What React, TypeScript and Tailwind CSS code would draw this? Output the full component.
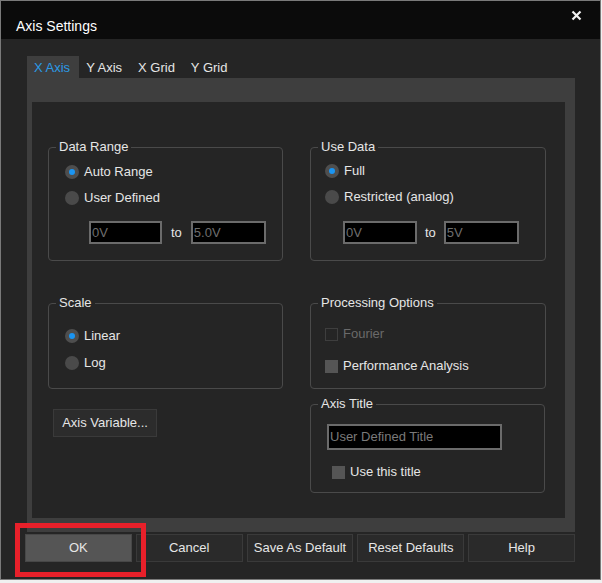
import React from "react";

function Radio({ label, checked }: { label: string; checked?: boolean }) {
  return (
    <div className="flex h-[20px] items-center gap-[5px]">
      <span
        className={
          "flex h-[14px] w-[14px] items-center justify-center rounded-full " +
          (checked ? "bg-[#4e4e4e]" : "bg-[#4a4a4a]")
        }
      >
        {checked && <span className="h-[6px] w-[6px] rounded-full bg-[#1b95f2]" />}
      </span>
      <span>{label}</span>
    </div>
  );
}

function Check({ label, disabled }: { label: string; disabled?: boolean }) {
  return (
    <div className="flex h-[20px] items-center gap-[5px]">
      <span
        className={
          "h-[13px] w-[13px] " +
          (disabled ? "border border-[#3e3e3e]" : "bg-[#555555]")
        }
      />
      <span className={disabled ? "text-[#6a6a6a]" : ""}>{label}</span>
    </div>
  );
}

function Field({ value, w }: { value: string; w: string }) {
  return (
    <div
      className={
        "flex h-[23px] items-center border-2 border-[#6b6b6b] bg-black pl-[1px] text-[#6e6e6e] " + w
      }
    >
      {value}
    </div>
  );
}

function Group({
  title,
  className,
  children,
}: {
  title: string;
  className: string;
  children: React.ReactNode;
}) {
  return (
    <fieldset className={"rounded-[4px] border border-[#4a4a4a] " + className}>
      <legend className="ml-[7px] px-[3px] leading-[16px]">{title}</legend>
      {children}
    </fieldset>
  );
}

export default function App() {
  return (
    <div className="relative h-[583px] w-[602px] bg-[#f0f0f0] font-['Liberation_Sans',sans-serif] text-[13px] text-[#e6e6e6]">
      <div className="flex h-[580px] w-[601px] flex-col border border-[#7a7a7a] bg-[#252525]">
        {/* title bar */}
        <div className="flex h-[38px] items-start justify-between bg-[#0b0b0b]">
          <span className="pl-[15px] pt-[17px] text-[14px] leading-[16px] text-white">Axis Settings</span>
          <svg className="mr-[18px] mt-[9px]" width="11" height="11" viewBox="0 0 11 11">
            <path d="M1.5 1.5 L9.5 9.5 M9.5 1.5 L1.5 9.5" stroke="#f2f2f2" strokeWidth="2.2" />
          </svg>
        </div>

        <div className="flex flex-col pl-[26px] pr-[25px] pt-[17px]">
          {/* tabs */}
          <div className="flex h-[22px] items-center">
            <div className="flex h-full items-center bg-[#3e3e3e] pl-[7px] pr-[9px] pt-[2px] text-[#2b9be6]">X Axis</div>
            <div className="pl-[7px] pr-[9px] pt-[2px]">Y Axis</div>
            <div className="pl-[7px] pr-[9px] pt-[2px]">X Grid</div>
            <div className="pl-[7px] pr-[9px] pt-[2px]">Y Grid</div>
          </div>

          {/* tab page */}
          <div className="bg-[#3e3e3e] pb-[14px] pl-[5px] pr-[10px] pt-[24px]">
            <div className="flex h-[416px] gap-[27px] bg-[#252525] pl-[16px]">
              <div className="flex w-[235px] flex-col">
                <Group title="Data Range" className="mt-[37px] h-[122px]">
                  <div className="pl-[16px]">
                    <div className="mt-[7px] flex flex-col gap-[6px]">
                      <Radio label="Auto Range" checked />
                      <Radio label="User Defined" />
                    </div>
                    <div className="ml-[24px] mt-[13px] flex items-center gap-[9px]">
                      <Field value="0V" w="w-[73px]" />
                      <span>to</span>
                      <Field value="5.0V" w="w-[75px]" />
                    </div>
                  </div>
                </Group>

                <Group title="Scale" className="mt-[34px] h-[94px]">
                  <div className="mt-[15px] flex flex-col gap-[7px] pl-[16px]">
                    <Radio label="Linear" checked />
                    <Radio label="Log" />
                  </div>
                </Group>

                <button className="ml-[5px] mt-[20px] h-[28px] w-[104px] border border-[#3a3a3a] bg-[#2c2c2c]">
                  Axis Variable...
                </button>
              </div>

              <div className="flex w-[236px] flex-col">
                <Group title="Use Data" className="mt-[37px] h-[122px]">
                  <div className="pl-[14px]">
                    <div className="mt-[6px] flex flex-col gap-[6px]">
                      <Radio label="Full" checked />
                      <Radio label="Restricted (analog)" />
                    </div>
                    <div className="ml-[18px] mt-[14px] flex items-center gap-[8px]">
                      <Field value="0V" w="w-[74px]" />
                      <span>to</span>
                      <Field value="5V" w="w-[75px]" />
                    </div>
                  </div>
                </Group>

                <Group title="Processing Options" className="mt-[34px] h-[94px]">
                  <div className="mt-[13px] flex flex-col gap-[12px] pl-[14px]">
                    <Check label="Fourier" disabled />
                    <Check label="Performance Analysis" />
                  </div>
                </Group>

                <Group title="Axis Title" className="mt-[7px] h-[97px] w-[235px]">
                  <div className="pl-[16px]">
                    <div className="mt-[12px] flex h-[26px] w-[175px] items-center border-2 border-[#6b6b6b] bg-black pl-[1px] text-[#7a7a7a]">
                      User Defined Title
                    </div>
                    <div className="ml-[5px] mt-[12px]">
                      <Check label="Use this title" />
                    </div>
                  </div>
                </Group>
              </div>
            </div>
          </div>

          {/* buttons */}
          <div className="-ml-[2px] mt-[2px] flex h-[28px] gap-[4px]">
            <button className="flex-1 border border-[#474747] bg-[#555555]">OK</button>
            <button className="flex-1 border border-[#3a3a3a] bg-[#2a2a2a]">Cancel</button>
            <button className="flex-1 border border-[#3a3a3a] bg-[#2a2a2a]">Save As Default</button>
            <button className="flex-1 border border-[#3a3a3a] bg-[#2a2a2a]">Reset Defaults</button>
            <button className="flex-1 border border-[#3a3a3a] bg-[#2a2a2a]">Help</button>
          </div>
        </div>
      </div>

      {/* highlight annotation */}
      <div className="absolute left-[15px] top-[523px] h-[54px] w-[131px] border-[5px] border-[#e8202a]" />
    </div>
  );
}
